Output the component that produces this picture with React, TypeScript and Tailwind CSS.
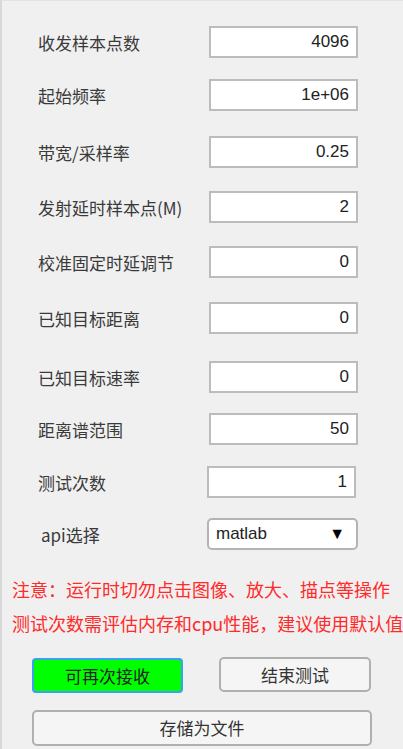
import React from 'react'

type Row = {
  label: string
  value: string
  mt: string
  box: string
}

const rows: Row[] = [
  { label: '收发样本点数', value: '4096', mt: 'mt-[25px]', box: 'ml-[207px]' },
  { label: '起始频率', value: '1e+06', mt: 'mt-[21px]', box: 'ml-[207px]' },
  { label: '带宽/采样率', value: '0.25', mt: 'mt-[25px]', box: 'ml-[207px]' },
  { label: '发射延时样本点(M)', value: '2', mt: 'mt-[23px]', box: 'ml-[207px]' },
  { label: '校准固定时延调节', value: '0', mt: 'mt-[23px]', box: 'ml-[207px]' },
  { label: '已知目标距离', value: '0', mt: 'mt-[24px]', box: 'ml-[207px]' },
  { label: '已知目标速率', value: '0', mt: 'mt-[27px]', box: 'ml-[207px]' },
  { label: '距离谱范围', value: '50', mt: 'mt-[20px]', box: 'ml-[207px]' },
  { label: '测试次数', value: '1', mt: 'mt-[21px]', box: 'ml-[205px]' },
]

const font = { fontFamily: '"Noto Sans CJK SC", "Liberation Sans", sans-serif' }

export default function App() {
  return (
    <div
      className="w-[403px] h-[749px] overflow-hidden bg-[#f0f0f0] border-l-2 border-t border-l-[#d9d9d9] border-t-[#e4e4e4] text-[#3a3a3a]"
      style={font}
    >
      <div className="flex flex-col">
        {rows.map((r) => (
          <div key={r.label} className={`relative flex items-center h-[32px] ${r.mt}`}>
            <span className="absolute left-[36px] text-[17px] leading-none whitespace-nowrap">{r.label}</span>
            <div
              className={`${r.box} w-[149px] h-[32px] bg-white border-2 border-[#bcbcbc] flex items-center justify-end pr-[7px] text-[17px] text-[#222222]`}
              style={{ fontFamily: '"Liberation Sans", Arial, sans-serif' }}
            >
              {r.value}
            </div>
          </div>
        ))}

        <div className="relative flex items-center h-[32px] mt-[20px]">
          <span className="absolute left-[39px] text-[17px] leading-none whitespace-nowrap">api选择</span>
          <div
            className="ml-[205px] w-[151px] h-[32px] bg-white border-2 border-[#b4b4b4] rounded-[5px] flex items-center justify-between pl-[7px] pr-[11px] text-[17px] text-[#222222]"
            style={{ fontFamily: '"Liberation Sans", Arial, sans-serif' }}
          >
            <span>matlab</span>
            <span className="text-[16px] text-black">▼</span>
          </div>
        </div>

        <div className="mt-[22px] pl-[10px] text-[#ff2a2a] text-[18px] leading-[34px] whitespace-nowrap">
          <div>注意：运行时切勿点击图像、放大、描点等操作</div>
          <div>测试次数需评估内存和cpu性能，建议使用默认值</div>
        </div>

        <div className="flex mt-[18px] pl-[30px]">
          <button className="w-[151px] h-[35px] bg-[#00ff00] border-2 border-[#3aa0f0] rounded-[4px] text-[17px] text-[#222222]">
            可再次接收
          </button>
          <button className="ml-[36px] mt-[-1px] w-[152px] h-[35px] bg-[#f5f5f5] border-2 border-[#b0b0b0] rounded-[5px] text-[17px] text-[#333333]">
            结束测试
          </button>
        </div>

        <div className="mt-[17px] pl-[30px]">
          <button className="w-[340px] h-[36px] bg-[#f5f5f5] border-2 border-[#b0b0b0] rounded-[5px] text-[17px] text-[#333333]">
            存储为文件
          </button>
        </div>
      </div>
    </div>
  )
}
